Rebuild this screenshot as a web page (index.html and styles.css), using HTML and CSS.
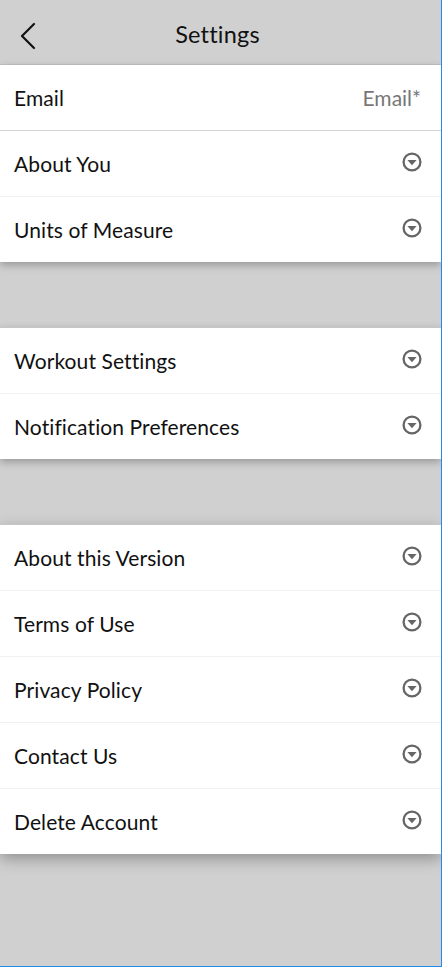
FILE: index.html
```html
<!DOCTYPE html>
<html lang="en">
<head>
<meta charset="utf-8">
<title>Settings</title>
<link rel="stylesheet" href="styles.css">
</head>
<body>
<div class="screen">
  <header class="topbar">
    <button class="back" aria-label="Back">
      <svg width="18" height="28" viewBox="0 0 18 28"><path d="M15 2 L3 14 L15 26" fill="none" stroke="#111" stroke-width="2.2" stroke-linecap="round" stroke-linejoin="round"/></svg>
    </button>
    <h1 class="title">Settings</h1>
  </header>

  <section class="group">
    <div class="row row-strong"><span class="label">Email</span><span class="value">Email*</span></div>
    <div class="row"><span class="label">About You</span><span class="chev"><svg width="22" height="22" viewBox="0 0 22 22"><circle cx="11" cy="11" r="8.4" fill="none" stroke="#666" stroke-width="2.3"/><path d="M6.4 9 H15.6 L11 14.2 Z" fill="#666"/></svg></span></div>
    <div class="row"><span class="label">Units of Measure</span><span class="chev"><svg width="22" height="22" viewBox="0 0 22 22"><circle cx="11" cy="11" r="8.4" fill="none" stroke="#666" stroke-width="2.3"/><path d="M6.4 9 H15.6 L11 14.2 Z" fill="#666"/></svg></span></div>
  </section>

  <div class="gap"></div>

  <section class="group">
    <div class="row"><span class="label">Workout Settings</span><span class="chev"><svg width="22" height="22" viewBox="0 0 22 22"><circle cx="11" cy="11" r="8.4" fill="none" stroke="#666" stroke-width="2.3"/><path d="M6.4 9 H15.6 L11 14.2 Z" fill="#666"/></svg></span></div>
    <div class="row"><span class="label">Notification Preferences</span><span class="chev"><svg width="22" height="22" viewBox="0 0 22 22"><circle cx="11" cy="11" r="8.4" fill="none" stroke="#666" stroke-width="2.3"/><path d="M6.4 9 H15.6 L11 14.2 Z" fill="#666"/></svg></span></div>
  </section>

  <div class="gap"></div>

  <section class="group group-last">
    <div class="row"><span class="label">About this Version</span><span class="chev"><svg width="22" height="22" viewBox="0 0 22 22"><circle cx="11" cy="11" r="8.4" fill="none" stroke="#666" stroke-width="2.3"/><path d="M6.4 9 H15.6 L11 14.2 Z" fill="#666"/></svg></span></div>
    <div class="row"><span class="label">Terms of Use</span><span class="chev"><svg width="22" height="22" viewBox="0 0 22 22"><circle cx="11" cy="11" r="8.4" fill="none" stroke="#666" stroke-width="2.3"/><path d="M6.4 9 H15.6 L11 14.2 Z" fill="#666"/></svg></span></div>
    <div class="row"><span class="label">Privacy Policy</span><span class="chev"><svg width="22" height="22" viewBox="0 0 22 22"><circle cx="11" cy="11" r="8.4" fill="none" stroke="#666" stroke-width="2.3"/><path d="M6.4 9 H15.6 L11 14.2 Z" fill="#666"/></svg></span></div>
    <div class="row"><span class="label">Contact Us</span><span class="chev"><svg width="22" height="22" viewBox="0 0 22 22"><circle cx="11" cy="11" r="8.4" fill="none" stroke="#666" stroke-width="2.3"/><path d="M6.4 9 H15.6 L11 14.2 Z" fill="#666"/></svg></span></div>
    <div class="row"><span class="label">Delete Account</span><span class="chev"><svg width="22" height="22" viewBox="0 0 22 22"><circle cx="11" cy="11" r="8.4" fill="none" stroke="#666" stroke-width="2.3"/><path d="M6.4 9 H15.6 L11 14.2 Z" fill="#666"/></svg></span></div>
  </section>
</div>
</body>
</html>
```

FILE: styles.css
```css
* { box-sizing: border-box; }
html, body { margin: 0; padding: 0; }
body {
  background: #d0d0d0;
  font-family: "Lato", "Noto Sans", sans-serif;
  color: #111;
}
.screen {
  width: 442px;
  height: 967px;
  background: #d0d0d0;
  border-right: 1px solid #2489ee;
  border-bottom: 1px solid #2489ee;
  overflow: hidden;
}
.topbar {
  height: 65px;
  display: flex;
  align-items: center;
  justify-content: center;
  border-bottom: 1px solid #c2c2c2;
  position: relative;
}
.back {
  position: absolute;
  left: 17px;
  top: 21px;
  background: none;
  border: 0;
  padding: 0;
  width: 22px;
  height: 30px;
  display: flex;
  align-items: center;
  justify-content: center;
}
.title {
  margin: 0;
  font-size: 23.5px;
  font-weight: 400;
  letter-spacing: 0.2px;
  padding: 3px 6px 0 0;
}
.group {
  background: #fff;
  box-shadow: 0 3px 8px rgba(0, 0, 0, 0.28);
  position: relative;
  border-top: 1px solid #c6c6c6;
}
.group:first-of-type { border-top: 0; }
.group-last { box-shadow: 0 5px 14px rgba(0, 0, 0, 0.3); }
.row {
  height: 66px;
  display: flex;
  align-items: center;
  justify-content: space-between;
  padding: 0 18px 0 14px;
  border-bottom: 1px solid #f1f1f1;
}
.row:last-child { border-bottom: 0; height: 65px; }
.row-strong { border-bottom: 1px solid #d4d4d4; padding-right: 20px; }
.label {
  font-size: 21px;
  letter-spacing: 0.1px;
}
.value {
  font-size: 21px;
  color: #777;
}
.chev { display: flex; margin: 0 0 4px; }
.gap { height: 65px; }
```
